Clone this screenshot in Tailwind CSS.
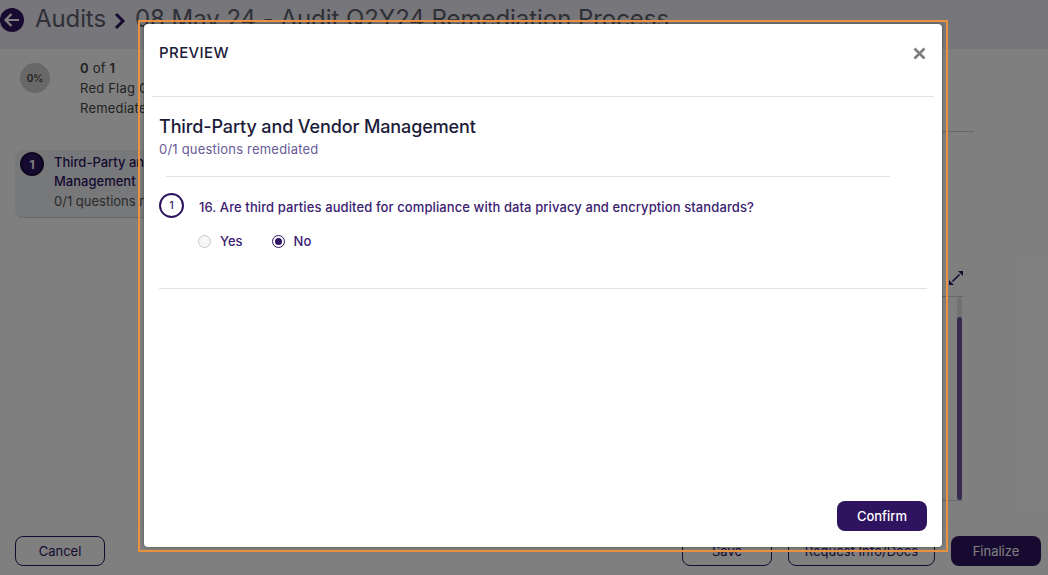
<!DOCTYPE html>
<html lang="en">
<head>
    <meta charset="UTF-8">
    <title>Audits</title>
    <script src="https://cdn.jsdelivr.net/npm/@tailwindcss/browser@4"></script>
</head>
<body class="relative w-[1048px] h-[575px] overflow-hidden bg-white font-['Inter',sans-serif] text-[#2e1460]">
    <!-- page behind the modal -->
    <div class="flex flex-col h-full">
        <div class="h-[49px] shrink-0 flex items-start pt-[8px] gap-[10px] bg-[#ecedf6]">
            <svg class="w-6 h-6 shrink-0" viewBox="0 0 24 24">
                <circle cx="12" cy="12" r="12" fill="#2e1460"/>
                <path d="M19 12H6M11.5 6 5.5 12l6 6" fill="none" stroke="#fff" stroke-width="2.2"/>
            </svg>
            <span class="ml-px text-[24px] leading-[22px] tracking-[-0.1px] text-[#5f5f6e]">Audits</span>
            <svg class="w-[12px] h-[18px] mt-[4px] -ml-[2px]" viewBox="0 0 12 18"><path d="M2 2l7 7-7 7" fill="none" stroke="#2e1460" stroke-width="3"/></svg>
            <span class="-ml-px text-[24px] leading-[22px] tracking-[-0.05px] text-[#5f5f6e] whitespace-nowrap">08 May 24 - Audit Q2Y24 Remediation Process</span>
        </div>
        <div class="flex-1 flex flex-col min-h-0">
            <div class="flex gap-[30px] pl-[20px] pt-[9px] h-[82px] text-[13px] leading-[20px] tracking-[0.2px] text-[#444]">
                <div class="w-[30px] h-[30px] mt-[5px] rounded-full bg-[#d0d0d0] flex items-center justify-center text-[10px] tracking-normal font-semibold">0%</div>
                <div>
                    <div><b class="font-semibold">0</b> of <b class="font-semibold">1</b></div>
                    <div>Red Flag Questions</div>
                    <div>Remediated</div>
                </div>
            </div>
            <div class="flex flex-1 min-h-0 relative">
                <div class="w-[300px] pl-[15px] pt-[19px]">
                    <div class="flex gap-[10px] h-[68px] rounded-lg bg-[#eef0f5] border-b border-[#d0d0d0] pl-[5px] pt-[2px] text-[13px] leading-[19px]">
                        <div class="w-[24px] h-[24px] rounded-full bg-[#2e1460] border-2 border-[#1a0a3a] text-white flex items-center justify-center text-[12px] font-bold shrink-0">1</div>
                        <div class="whitespace-nowrap mt-px">
                            <div class="font-medium">Third-Party and Vendor</div>
                            <div class="font-medium">Management</div>
                            <div class="mt-px text-[#555]">0/1 questions remediated</div>
                        </div>
                    </div>
                </div>
                <div class="flex-1 min-w-0 pt-[140px] pr-[85px]">
                    <div class="flex justify-end"><svg class="w-[14px] h-[14px]" viewBox="0 0 14 14"><path d="M3.5 10.5 10.5 3.5" stroke="#2e1460" stroke-width="1.6"/><path d="M9 0h5v5zM0 9v5h5z" fill="#2e1460"/></svg></div>
                    <div class="mt-[11px] h-[205px] border-y border-[#d0d0d0] flex justify-end">
                        <div class="w-[5px] h-full mr-px bg-[#e4e4e4] rounded-full flex flex-col justify-end">
                            <div class="h-[183px] bg-[#70549e] rounded-full"></div>
                        </div>
                    </div>
                </div>
                <!-- faint rule running off to the right of the stats block -->
                <div class="absolute right-[74px] top-0 w-[60px] border-t border-[#d0d0d0]"></div>
            </div>
            <div class="h-[51px] shrink-0 flex items-start pt-[11px] pl-[15px] pr-[7px] border-t border-[#f6f6f6] text-[13px] leading-[28px]">
                <button class="w-[90px] h-[30px] rounded-lg border border-[#2e1460] text-[#2e1460]">Cancel</button>
                <div class="ml-auto flex gap-[16px]">
                    <button class="w-[90px] h-[30px] rounded-lg border border-[#2e1460]">Save</button>
                    <button class="w-[147px] h-[30px] rounded-lg border border-[#2e1460]">Request Info/Docs</button>
                    <button class="w-[90px] h-[30px] rounded-lg bg-[#2e1460] text-white">Finalize</button>
                </div>
            </div>
        </div>
    </div>

    <!-- overlay -->
    <div class="absolute inset-0 bg-black/50"></div>

    <!-- orange highlight around modal -->
    <div class="absolute left-[138px] top-[20px] w-[810px] h-[532px] border-[2.5px] border-[#e8923f]"></div>

    <!-- modal -->
    <div class="absolute left-[144px] top-[24px] w-[798px] h-[523px] bg-white rounded-[4px] shadow-[0_0_3px_rgba(0,0,0,0.4)] flex flex-col">
        <div class="h-[73px] shrink-0 mx-[8px] px-[7px] flex items-start justify-between border-b border-[#e2e2e2]">
            <div class="mt-[19px] text-[15px] leading-[20px] tracking-[0.4px] font-medium text-[#1c1c3a]">PREVIEW</div>
            <svg class="w-[13px] h-[13px] mt-[23px] mr-[1.5px]" viewBox="0 0 13 13"><path d="M1.5 1.5l10 10M11.5 1.5l-10 10" stroke="#7d7d7d" stroke-width="2.6"/></svg>
        </div>
        <div class="px-[15px] pt-[19px]">
            <div class="text-[18px] leading-[22px] tracking-[-0.12px] font-medium text-[#1c1c3a]">Third-Party and Vendor Management</div>
            <div class="mt-[4px] text-[13px] leading-[15px] tracking-[0.2px] text-[#6a5a96]">0/1 questions remediated</div>
        </div>
        <div class="mt-[19px] ml-[22px] w-[724px] border-t border-[#e2e2e2]"></div>
        <div class="px-[15px] pt-[16px] pb-[39px] flex gap-[15px]">
            <div class="w-[25px] h-[25px] rounded-full border-2 border-[#2e1460] flex items-center justify-center text-[10px] font-medium shrink-0">1</div>
            <div>
                <div class="text-[13px] leading-[17px] tracking-[0.1px] mt-[6px] font-medium text-[#3a2170]">16. Are third parties audited for compliance with data privacy and encryption standards?</div>
                <div class="mt-[17px] flex items-center text-[13px] leading-[16px] font-medium text-[#3a2170]">
                    <span class="-ml-px w-[13px] h-[13px] rounded-full border border-[#c8c8c8] bg-[#f6f6f6]"></span>
                    <span class="ml-[9px]">Yes</span>
                    <span class="ml-[29px] w-[13px] h-[13px] rounded-full border border-[#2e1460] flex items-center justify-center"><span class="w-[7px] h-[7px] rounded-full bg-[#2e1460]"></span></span>
                    <span class="ml-[9px]">No</span>
                </div>
            </div>
        </div>
        <div class="mx-[15px] border-t border-[#e2e2e2]"></div>
        <div class="mt-auto flex justify-end pr-[15px] pb-[16px]">
            <button class="w-[90px] h-[30px] rounded-lg bg-[#2e1460] text-white text-[13px] leading-[31px] font-medium">Confirm</button>
        </div>
    </div>
</body>
</html>
